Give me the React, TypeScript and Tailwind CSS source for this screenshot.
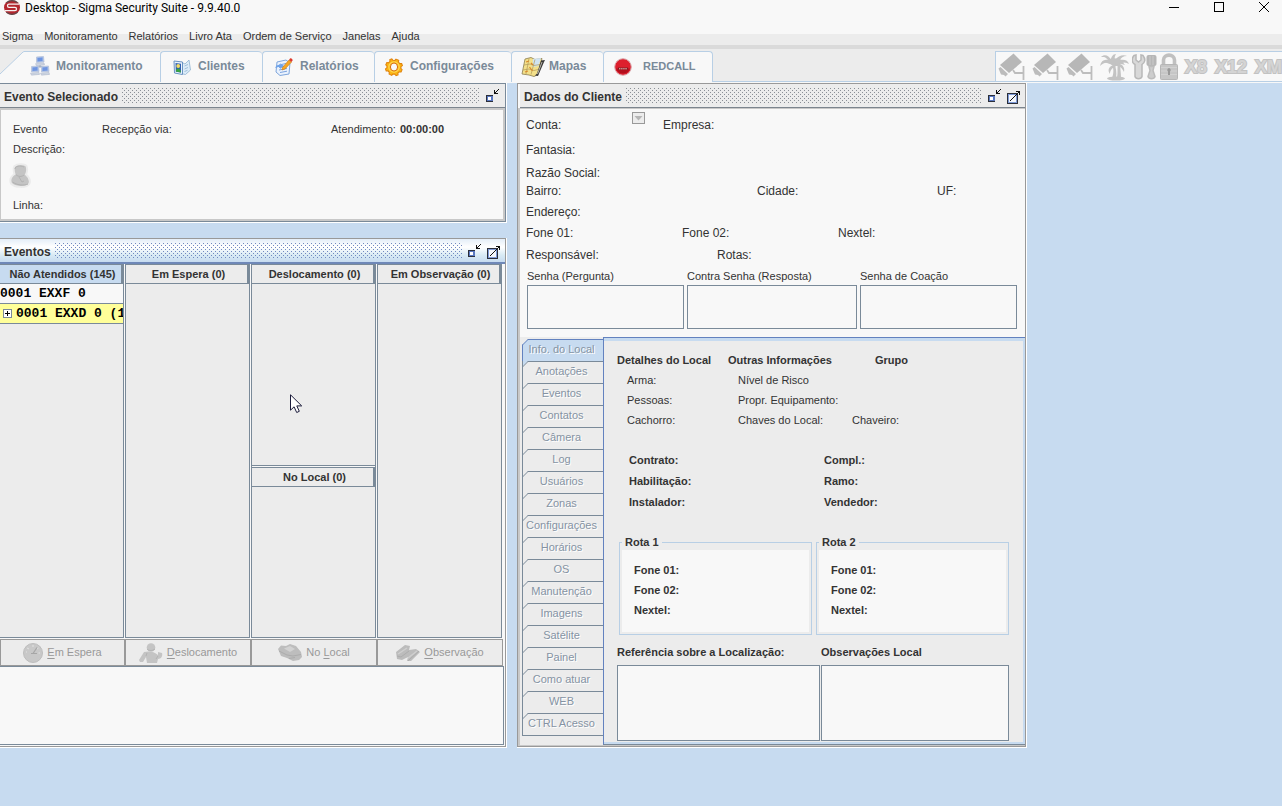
import React from 'react';

const DOTS =
  'bg-[conic-gradient(from_270deg_at_1px_1px,#8a8f96_90deg,transparent_0),conic-gradient(from_270deg_at_1px_1px,#8a8f96_90deg,transparent_0)] bg-[length:4px_4px] bg-[position:0_0,2px_2px]';
const DOTS_ACTIVE =
  'bg-[conic-gradient(from_270deg_at_1px_1px,#7088c0_90deg,transparent_0),conic-gradient(from_270deg_at_1px_1px,#7088c0_90deg,transparent_0)] bg-[length:4px_4px] bg-[position:0_0,2px_2px]';

/* ---------- icons ---------- */

function Logo() {
  return (
    <svg width="16" height="16" viewBox="0 0 16 16" aria-hidden="true">
      <ellipse cx="8" cy="7.500" rx="8" ry="7.300" fill="#b3262e" />
      <path d="M2.500 2.700A8 7.300 0 0 1 13.500 2.700M2.500 12.300A8 7.300 0 0 0 13.500 12.300" stroke="#5d4a4c" strokeWidth="1.200" fill="none" />
      <path d="M15 4.200H5C3.800 4.200 3.500 4.800 3.500 5.800S4 7.400 5 7.400H11C12.200 7.400 12.500 8 12.500 9S12 10.700 11 10.700H1" stroke="#f6f1f1" strokeWidth="1.300" fill="none" />
    </svg>
  );
}

function MinimizeIcon() {
  return (
    <svg width="14" height="14" viewBox="0 0 14 14" shapeRendering="crispEdges" aria-hidden="true">
      <rect x="0" y="7" width="7" height="7" fill="#2b2f3a" />
      <rect x="1" y="8" width="6" height="6" fill="#5a78c0" />
      <rect x="2" y="9" width="3" height="3" fill="#fff" />
      <rect x="0" y="13" width="7" height="1" fill="#2b2f3a" />
      <path d="M8 2h1v3h3v1H8zM9 4h1v1H9zM10 3h1v1h-1zM11 2h1v1h-1zM12 1h1v1h-1z" fill="#111" />
    </svg>
  );
}

function MaximizeIcon() {
  return (
    <svg width="14" height="14" viewBox="0 0 14 14" shapeRendering="crispEdges" aria-hidden="true">
      <rect x="0" y="3" width="11" height="11" fill="#2b2f3a" />
      <rect x="1" y="4" width="9" height="9" fill="#7f9bd8" />
      <rect x="2" y="5" width="7" height="7" fill="#f4f7fc" />
      <path d="M3 10h1v1H3zM4 9h1v1H4zM5 8h1v1H5zM6 7h1v1H6zM7 6h1v1H7zM8 5h1v1H8zM9 4h1v1H9zM10 3h1v1h-1zM11 2h1v1h-1zM9 1h4v4h-1V2H9z" fill="#111" />
    </svg>
  );
}

function NetworkIcon() {
  return (
    <svg width="20" height="20" viewBox="0 0 20 20" aria-hidden="true">
      <path d="M10 9v3M5 12l5-2 5 2" stroke="#9aa7bd" fill="none" />
      {[
        [5.5, 0.5],
        [0.5, 10],
        [10.5, 10],
      ].map(([x, y]) => (
        <g key={x} transform={`translate(${x} ${y})`}>
          <path d="M1 0.5L8 0l.5 5.5L1 6z" fill="#a9c0ea" stroke="#b6c2d8" strokeWidth="0.8" />
          <path d="M2 1.4L7 1v3.5L2 5z" fill="#6f95e0" />
          <path d="M0 7.2L8.5 6.4 9 8.4 1 9.2z" fill="#cdd5e2" stroke="#a8b3c6" strokeWidth="0.5" />
        </g>
      ))}
    </svg>
  );
}

function ClientIcon() {
  return (
    <svg width="20" height="20" viewBox="0 0 20 20" aria-hidden="true">
      <path d="M9 5l4 2 4-4 1.500 10-5 4.500-5-1z" fill="#dcecf8" stroke="#8fb2d0" strokeWidth="0.8" />
      <path d="M12.500 9l3.500-1.500M12.500 12l3.500-1.500M12.500 14.500l3-1.200" stroke="#8fb2d0" strokeWidth="0.8" />
      <path d="M2 4L10.500 5v12.500L2.500 16z" fill="#eaf3fd" stroke="#6a93c4" />
      <path d="M3.500 6l5.500.8v8.700l-5.200-.8z" fill="#2f5fb0" />
      <circle cx="6.200" cy="9" r="1.900" fill="#f5dc62" />
      <path d="M3.800 14.500c.4-4.300 4.800-4 5.200 1z" fill="#38a33f" />
    </svg>
  );
}

function ReportIcon() {
  return (
    <svg width="20" height="20" viewBox="0 0 20 20" aria-hidden="true">
      <path d="M3 5l9-2 4 3-1 11-9 1.500L2 15z" fill="#eaf2fd" stroke="#7fa6dc" />
      <path d="M5 8l7-1.500M5 10.500l8-1.500M5 13l8-1.500M6 15.500l7-1.300" stroke="#6d98da" strokeWidth="0.9" />
      <path d="M1 11c1-3 4-4 6-3l-1-2 4 3-4 3v-2c-2 0-3 0-5 1z" fill="#6fa4ea" />
      <path d="M8.500 10.500L15 3l2.500 2-6.500 7-3 1z" fill="#f6a623" stroke="#c97b12" strokeWidth="0.6" />
      <path d="M15 3l1-1.500c1-.8 3 .8 2.500 2L17.500 5z" fill="#dd3b2e" />
    </svg>
  );
}

function GearIcon() {
  return (
    <svg width="20" height="20" viewBox="0 0 20 20" aria-hidden="true">
      <g transform="rotate(25 10 10)">
        <path
          d="M8.500 2h3l.5 1.700 1.800.8 1.700-.9 1.500 1.500-.8 1.700.8 1.700 1.500.5v2.500l-1.600.6-.8 1.600.9 1.700-1.500 1.500-1.700-.8-1.800.8-.5 1.600h-3l-.5-1.700-1.800-.8-1.600.9-1.500-1.500.8-1.700-.8-1.700-1.500-.5V9l1.600-.6.8-1.600-.9-1.700 1.500-1.500 1.700.8 1.700-.7z"
          fill="#fbb413"
          stroke="#e0820c"
        />
      </g>
      <circle cx="10" cy="10" r="5.200" fill="none" stroke="#ffd84f" strokeWidth="1.200" />
      <ellipse cx="10" cy="10" rx="3.600" ry="4" fill="#f8f8f8" stroke="#d9700b" />
    </svg>
  );
}

function MapIcon() {
  return (
    <svg width="24" height="20" viewBox="0 0 24 20" aria-hidden="true">
      <path d="M4 2l6-1.500 4 2 7-1-4 16-4 2-5-1.500-7-1z" fill="#f3e08a" stroke="#8a7c50" strokeWidth="0.8" />
      <path d="M12 2l8-.9-2.500 8-6 1z" fill="#cfe3f2" />
      <path d="M3 8l6-1 4 1.500 6-1M2 13l6-1 5 1.500 4-1M8 1.500L5 17M14 2.500l-4 15" stroke="#b09a5a" strokeWidth="0.7" fill="none" />
      <path d="M5 5l3-1M10 6l2 2M8.500 10l3 4M4 15l3-1" stroke="#d98a2b" strokeWidth="1.200" />
      <path d="M20 3.500l4-.5-1 2-3 7-3 7-3-.5 2-2z" fill="#3b3a38" />
      <path d="M21 5l-4.500 12" stroke="#b8b4a8" />
    </svg>
  );
}

function RedcallIcon() {
  return (
    <svg width="18" height="18" viewBox="0 0 18 18" aria-hidden="true">
      <circle cx="9" cy="9" r="8.300" fill="#dd1f2d" stroke="#d9a9ad" />
      <path d="M2 10.500h14c-1 3-3.500 5-7 5s-6-2-7-5z" fill="#b30f1d" />
      <path d="M4 10.500h10" stroke="#7c1a20" strokeWidth="1.800" />
      <path d="M5 10.800h8" stroke="#f0c9c4" strokeDasharray="1.500 0.600" />
    </svg>
  );
}

function CameraIcon() {
  return (
    <svg width="28" height="28" viewBox="0 0 28 28" aria-hidden="true">
      <path d="M15.500 0.500L24 9 11 20 2 12z" fill="#b7b7b7" />
      <path d="M0.500 15.500L2.500 14l7.500 7-2.500 2.500-1.500-1.500-3-.5z" fill="#bcbcbc" />
      <path d="M15 17l2 3h8.500M25.500 13v14" stroke="#bdbdbd" strokeWidth="1.800" fill="none" />
    </svg>
  );
}

function PalmIcon() {
  return (
    <svg width="30" height="28" viewBox="0 0 30 28" aria-hidden="true">
      <g fill="#c3c3c3">
        <path d="M12 12C7 8 3 10 0 13c1-5 4-7 8-6C5 3 3 4 1 4c3-3 8-2 10 3 0-3 2-6 5-6-1 2-2 4-1 6 3-4 8-6 12-4-4 0-6 2-7 4 4-1 8 0 9 4-3-2-6-2-9 0 3 1 5 4 4 8-2-4-4-6-8-6-3 1-6 4-6 8-3-4-1-8 4-9z" />
        <path d="M11 9c3 6 3 11 1 16h4c1-5 0-11-2-16zM18 10c-1 4 0 10-1 15h4c0-5-1-11-1-15z" />
        <path d="M4 9l8-4 8 1 5 6-7-2-5 2z" />
        <ellipse cx="16" cy="25.500" rx="9" ry="2" />
      </g>
    </svg>
  );
}

function ToolsIcon() {
  return (
    <svg width="25" height="26" viewBox="0 0 25 26" aria-hidden="true">
      <path
        d="M2 1.500l2-.5v5l2.500 2L9 6V1l2 .5c3 4 2 7-1 9v12c-1 3-6 3-7 0v-12C0 9-1 5 2 1.500z"
        fill="#d8d8d8"
        stroke="#b8b8b8"
        strokeWidth="1.500"
      />
      <rect x="14.500" y="1" width="10" height="11" rx="2" fill="#b6b6b6" />
      <path d="M18 2v9M21 2v9" stroke="#cacaca" />
      <path d="M17 12.500h5l-1 4 2 6c-1 3-6 3-7 0l2-6z" fill="#cdcdcd" stroke="#bcbcbc" strokeWidth="1.500" />
    </svg>
  );
}

function LockIcon() {
  return (
    <svg width="20" height="27" viewBox="0 0 20 27" aria-hidden="true">
      <path d="M4.500 12V7C4.500 0.500 15.500 0.500 15.500 7V12" fill="none" stroke="#c0c0c0" strokeWidth="3.600" />
      <rect x="1.500" y="11.500" width="17" height="15" rx="1" fill="#c6c6c6" stroke="#b6b6b6" />
      <path d="M2 14.500h16M2 18h16M2 21.500h16" stroke="#d2d2d2" />
      <path d="M10 15a2 2 0 0 1 1 3.500V22H9v-3.500A2 2 0 0 1 10 15z" fill="#999" />
    </svg>
  );
}

function UserIcon() {
  return (
    <svg width="24" height="26" viewBox="0 0 24 26" aria-hidden="true">
      <path
        d="M5.500 3c3-2.500 10-2.500 12 0 1 3 1 5.500-.5 8.500 3 2.500 4.500 6 3.500 9-3 5-15 4-18.500 0-1.500-3.500 0-7 3.500-9.500-1-3-1.500-5.500 0-8z"
        fill="#c4c4c4"
        stroke="#ebebeb"
        strokeWidth="2"
      />
      <path d="M6 6c0-3 5-4 9-2M7 11.500c2 2.500 6 2.500 8 .5M3.500 19c4 3 11 4 15.500 2M10 14l3 5 2-1" stroke="#b2b2b2" fill="none" />
    </svg>
  );
}

function ClockIcon() {
  return (
    <svg width="20" height="20" viewBox="0 0 20 20" aria-hidden="true">
      <circle cx="10" cy="10" r="9.500" fill="#c8c8c8" stroke="#bdbdbd" />
      <path d="M4 5l2 1M10 2v2M15.500 5l-1.500 1M3 9h1M17 10h-1.500" stroke="#e2e2e2" />
      <path d="M8 10.500h6M10 10.500l4-6" stroke="#a6a6a6" strokeWidth="1.200" fill="none" />
    </svg>
  );
}

function PersonIcon() {
  return (
    <svg width="24" height="20" viewBox="0 0 24 20" aria-hidden="true">
      <g fill="#c4c4c4">
        <circle cx="12" cy="4.500" r="4.300" />
        <path d="M5 9c4-1 10-1 14 3v-3l4 1c1 3-1 6-4 6l-1 4H8l-1-6-3 5H1l-1-2z" />
      </g>
      <path d="M7 13l1-3M17 16l2-3M8 6c2 2 5 2 8 0" stroke="#b3b3b3" fill="none" />
    </svg>
  );
}

function CarIcon() {
  return (
    <svg width="24" height="17" viewBox="0 0 24 17" aria-hidden="true">
      <path d="M0 5l3-3.500L8 2l4-2 6 2 5 6 1 5-3 3-6 1-6-3-6-2z" fill="#bdbdbd" />
      <path d="M6 4.500l6-2.500 5 3-5 3z" fill="#d2d2d2" />
      <path d="M1 7l8 4 6 1 8-1.500M11 14.500l6-1" stroke="#acacac" fill="none" />
    </svg>
  );
}

function BinocularsIcon() {
  return (
    <svg width="24" height="18" viewBox="0 0 24 18" aria-hidden="true">
      <path d="M0 8l9-7 5 1-1 4 7-1 4 3-9 9-4 0 1-4-6 3-5-1z" fill="#bcbcbc" />
      <path d="M2 10l9-6M12 14l9-7" stroke="#cfcfcf" strokeWidth="1.500" />
      <path d="M1 12l4 1 8-6M12 17l2-2 9-8" stroke="#adadad" fill="none" />
    </svg>
  );
}

/* ---------- frames ---------- */

function FrameTitle({ title, active = false, maximizable = false }: { title: string; active?: boolean; maximizable?: boolean }) {
  return (
    <header
      className={
        active
          ? 'flex h-[25px] items-center border-b-2 border-[#6f88b8] bg-[linear-gradient(#e4eef8,#ffffff_35%,#d8eaf4_70%,#c7dbf0)] pt-0.5 pr-1 pl-1'
          : 'flex h-6 items-center border-b border-[#7c858e] bg-[#ececec] pt-0.5 pr-1 pl-1'
      }
    >
      <h2 className="text-xs font-bold">{title}</h2>
      <div className={`mr-1.5 mb-0.5 ml-1 h-4 flex-1 ${active ? DOTS_ACTIVE : DOTS}`} />
      <button type="button" aria-label="Minimizar" className="mr-px mb-1">
        <MinimizeIcon />
      </button>
      {maximizable && (
        <button type="button" aria-label="Maximizar" className="ml-1">
          <MaximizeIcon />
        </button>
      )}
    </header>
  );
}

function EventoSelecionado() {
  return (
    <section className="absolute top-0 left-0 w-[507px] border-r border-b border-white">
      <div className="border-t border-r border-b border-[#7a8a99]">
        <FrameTitle title="Evento Selecionado" />
        <div className="border-2 border-l border-[#c8c8c8] bg-[#f8f8f8] pt-[9px] pb-1 pl-3 text-[11px] leading-5">
          <div className="flex">
            <span className="w-[89px]">Evento</span>
            <span className="w-[229px]">Recepção via:</span>
            <span className="w-[69px]">Atendimento:</span>
            <b>00:00:00</b>
          </div>
          <p>Descrição:</p>
          <div className="-ml-1 py-1">
            <UserIcon />
          </div>
          <p className="pt-0.5">Linha:</p>
        </div>
      </div>
    </section>
  );
}

function ColumnTitle({ children, selected = false }: { children: React.ReactNode; selected?: boolean }) {
  return (
    <h3
      className={`h-[19px] shrink-0 border-r-2 border-b border-[#7a8a99] text-center text-[11px] leading-[18px] font-bold whitespace-nowrap ${
        selected ? 'bg-[#c7dbf0] pl-1' : 'bg-[#ececec] pl-1'
      }`}
    >
      {children}
    </h3>
  );
}

function Column({ children, first = false }: { children: React.ReactNode; first?: boolean }) {
  return (
    <div
      className={`flex min-w-0 flex-col border-y border-r border-[#7a8a99] ${
        first ? '' : 'ml-px border-l shadow-[-1px_0_0_#f8f8f8]'
      }`}
    >
      {children}
    </div>
  );
}

function ActionButton({ icon, before = '', letter, after }: { icon: React.ReactNode; before?: string; letter: string; after: string }) {
  return (
    <button
      type="button"
      disabled
      className="flex h-[27px] items-center justify-center gap-1 border border-[#999999] bg-[#ececec] text-[11px] text-[#999999]"
    >
      {icon}
      <span>
        {before}
        <u className="underline-offset-2">{letter}</u>
        {after}
      </span>
    </button>
  );
}

function Eventos() {
  return (
    <section className="absolute top-[155px] left-0 w-[507px] border-r border-b border-white">
      <div className="border-t border-r border-b border-[#999999] bg-[#f8f8f8]">
        <FrameTitle title="Eventos" active maximizable />
        <div className="grid h-[374px] grid-cols-[124px_126px_126px_126px]">
          <Column first>
            <ColumnTitle selected>Não Atendidos (145)</ColumnTitle>
            <ul className="flex-1 bg-[#ececec] font-['Liberation_Mono',monospace] text-[13px] leading-[19px] font-bold text-black">
              <li className="border-b border-[#7a8a99] bg-[#f8f8f8]">0001 EXXF 0</li>
              <li className="flex items-center overflow-hidden border-b border-[#7a8a99] bg-[#ffff99] pl-[3px] whitespace-nowrap">
                <button type="button" aria-label="Expandir" className="mr-1 shrink-0">
                  <svg width="9" height="9" viewBox="0 0 9 9" shapeRendering="crispEdges" aria-hidden="true">
                    <rect x="0.500" y="0.500" width="8" height="8" fill="#fff" stroke="#7a8a99" />
                    <path d="M2 4.500h5M4.500 2v5" stroke="#000" />
                  </svg>
                </button>
                0001 EXXD 0 (1
              </li>
            </ul>
          </Column>
          <Column>
            <ColumnTitle>Em Espera (0)</ColumnTitle>
            <div className="flex-1 bg-[#ececec]" />
          </Column>
          <Column>
            <ColumnTitle>Deslocamento (0)</ColumnTitle>
            <div className="h-[182px] border-b border-[#7a8a99] bg-[#ececec]" />
            <div className="mt-px border-t border-[#7a8a99]" />
            <ColumnTitle>No Local (0)</ColumnTitle>
            <div className="flex-1 bg-[#ececec]" />
          </Column>
          <Column>
            <ColumnTitle>Em Observação (0)</ColumnTitle>
            <div className="flex-1 bg-[#ececec]" />
          </Column>
        </div>
        <div className="mt-px grid grid-cols-[125px_126px_126px_126px]">
          <ActionButton icon={<ClockIcon />} letter="E" after="m Espera" />
          <ActionButton icon={<PersonIcon />} letter="D" after="eslocamento" />
          <ActionButton icon={<CarIcon />} before="No " letter="L" after="ocal" />
          <ActionButton icon={<BinocularsIcon />} letter="O" after="bservação" />
        </div>
        <textarea
          aria-label="Detalhes do evento"
          className="mb-px block h-[79px] w-[504px] resize-none border-y border-r border-[#7a8a99] bg-[#f8f8f8] outline-none"
        />
      </div>
    </section>
  );
}

const SIDE_TABS = [
  'Info. do Local',
  'Anotações',
  'Eventos',
  'Contatos',
  'Câmera',
  'Log',
  'Usuários',
  'Zonas',
  'Configurações',
  'Horários',
  'OS',
  'Manutenção',
  'Imagens',
  'Satélite',
  'Painel',
  'Como atuar',
  'WEB',
  'CTRL Acesso',
];

function SideTab({ label, selected }: { label: string; selected: boolean }) {
  return (
    <button
      type="button"
      role="tab"
      aria-selected={selected}
      className={`relative block h-[22px] w-full border-t border-l pr-[3px] pb-[3px] text-center text-[11px] leading-[18px] whitespace-nowrap text-[#8593a3] [text-shadow:1px_1px_0_#ffffff] ${
        selected ? 'border-[#6382bf] bg-[#c7dbf0]' : 'border-[#7a8a99] bg-[#ececec]'
      }`}
    >
      <svg className="absolute -top-px -left-px" width="6" height="6" viewBox="0 0 6 6" aria-hidden="true">
        <path d="M0 0h6L0 6z" fill={selected || label !== 'Anotações' ? '#ececec' : '#c7dbf0'} />
        <path d="M0.500 6L6 0.500" stroke={selected ? '#6382bf' : '#7a8a99'} />
        {!selected && <path d="M0.500 0v6" stroke="#7a8a99" />}
      </svg>
      {label}
    </button>
  );
}

function Secret({ id, label, className }: { id: string; label: string; className: string }) {
  return (
    <div className={className}>
      <label htmlFor={id} className="block text-[11px] leading-4 whitespace-nowrap">
        {label}
      </label>
      <textarea id={id} className="mt-px block h-11 w-full resize-none border border-[#7a8a99] bg-[#f8f8f8] outline-none" />
    </div>
  );
}

function Rota({ title }: { title: string }) {
  return (
    <fieldset className="w-[193px] border border-[#b8cfe5] px-[2px] pb-[2px]">
      <legend className="px-[3px] leading-4">{title}</legend>
      <div className="bg-[#f8f8f8] px-3 pt-2.5 pb-3 leading-5">
        <p>Fone 01:</p>
        <p>Fone 02:</p>
        <p>Nextel:</p>
      </div>
    </fieldset>
  );
}

function DadosDoCliente() {
  return (
    <section className="absolute top-0 left-[517px] w-[510px] border-r border-b border-white">
      <div className="border border-[#999999] bg-[#f8f8f8]">
        <div className="border-l-2 border-[#f8f8f8]">
          <FrameTitle title="Dados do Cliente" maximizable />
        </div>
        <div className="border-t border-b border-l-2 border-[#c8c8c8]">
          <div className="pt-2 pl-1.5 text-xs leading-4">
            <div className="flex">
              <span className="w-[106px]">Conta:</span>
              <button type="button" disabled aria-label="Abrir lista de contas" className="-mt-[5px] h-3 w-[13px] border border-[#999999] bg-[#ececec]">
                <svg width="11" height="10" viewBox="0 0 11 10" aria-hidden="true">
                  <path d="M1.500 3h8l-4 4.500z" fill="#b5b5b5" />
                </svg>
              </button>
              <span className="ml-[18px]">Empresa:</span>
            </div>
            <p className="mt-[9px]">Fantasia:</p>
            <p className="mt-[7px]">Razão Social:</p>
            <div className="mt-0.5 flex">
              <span className="w-[231px]">Bairro:</span>
              <span className="w-[180px]">Cidade:</span>
              <span>UF:</span>
            </div>
            <p className="mt-[5px]">Endereço:</p>
            <div className="mt-[5px] flex">
              <span className="w-[156px]">Fone 01:</span>
              <span className="w-[156px]">Fone 02:</span>
              <span>Nextel:</span>
            </div>
            <div className="mt-[6px] flex">
              <span className="w-[191px]">Responsável:</span>
              <span>Rotas:</span>
            </div>
            <div className="mt-[5px] flex gap-[3px] pl-px">
              <Secret id="senha" label="Senha (Pergunta)" className="w-[157px]" />
              <Secret id="contra-senha" label="Contra Senha (Resposta)" className="w-[170px]" />
              <Secret id="coacao" label="Senha de Coação" className="w-[157px]" />
            </div>
          </div>

          <div className="mt-2 flex bg-[#ececec]">
            <div role="tablist" aria-orientation="vertical" className="w-[83px] pt-0.5 pl-[2px]">
              <div className="border-b border-[#7a8a99]">
                {SIDE_TABS.map((label, i) => (
                  <SideTab key={label} label={label} selected={i === 0} />
                ))}
              </div>
            </div>
            <div role="tabpanel" className="flex-1 border-t border-b border-l border-t-[#6382bf] border-b-[#7a8a99] border-l-[#6382bf]">
              <div className="border-t-[3px] border-r-2 border-b-2 border-[#c7dbf0] pt-[9px] pb-px pl-[13px] text-[11px] leading-5">
                <div className="flex font-bold">
                  <span className="w-[111px] whitespace-nowrap">Detalhes do Local</span>
                  <span className="w-[147px]">Outras Informações</span>
                  <span>Grupo</span>
                </div>
                <div className="pl-2.5">
                  <div className="flex">
                    <span className="w-[111px]">Arma:</span>
                    <span>Nível de Risco</span>
                  </div>
                  <div className="flex">
                    <span className="w-[111px]">Pessoas:</span>
                    <span>Propr. Equipamento:</span>
                  </div>
                  <div className="flex">
                    <span className="w-[111px]">Cachorro:</span>
                    <span className="w-[114px]">Chaves do Local:</span>
                    <span>Chaveiro:</span>
                  </div>
                </div>
                <div className="grid grid-cols-[195px_auto] gap-y-px pt-5 pl-3 font-bold">
                  <span>Contrato:</span>
                  <span>Compl.:</span>
                  <span>Habilitação:</span>
                  <span>Ramo:</span>
                  <span>Instalador:</span>
                  <span>Vendedor:</span>
                </div>
                <div className="mt-[22px] ml-0.5 flex gap-1 font-bold">
                  <Rota title="Rota 1" />
                  <Rota title="Rota 2" />
                </div>
                <div className="mt-[7px] flex gap-px">
                  <div className="w-[203px]">
                    <label htmlFor="referencia" className="block font-bold">
                      Referência sobre a Localização:
                    </label>
                    <textarea id="referencia" className="mt-[3px] block h-[76px] w-full resize-none border border-[#7a8a99] bg-[#f8f8f8] outline-none" />
                  </div>
                  <div className="w-[188px]">
                    <label htmlFor="observacoes" className="block font-bold">
                      Observações Local
                    </label>
                    <textarea id="observacoes" className="mt-[3px] block h-[76px] w-full resize-none border border-[#7a8a99] bg-[#f8f8f8] outline-none" />
                  </div>
                </div>
              </div>
            </div>
          </div>
        </div>
      </div>
    </section>
  );
}

/* ---------- top of the window ---------- */

function TopTab({ label, icon, className }: { label: string; icon: React.ReactNode; className: string }) {
  return (
    <button
      type="button"
      role="tab"
      aria-selected="false"
      className={`flex h-[31px] items-center rounded-t-[4px] border-t border-l border-[#b8cfe5] bg-[#f8f8f8] font-bold text-[#7a8a99] ${className}`}
    >
      {icon}
      <span className="pb-0.5">{label}</span>
    </button>
  );
}

function TitleBar() {
  return (
    <header className="flex h-7 items-start bg-[#f8f8f8] pl-1">
      <Logo />
      <h1 className="ml-[5px] flex-1 font-['Roboto',sans-serif] text-xs leading-4 text-black">
        Desktop - Sigma Security Suite - 9.9.40.0
      </h1>
      <div className="flex gap-[33px] pt-px pr-3">
        <button type="button" aria-label="Minimizar janela">
          <svg width="12" height="12" viewBox="0 0 12 12" shapeRendering="crispEdges" aria-hidden="true">
            <path d="M1 6.500h10" stroke="#000" />
          </svg>
        </button>
        <button type="button" aria-label="Maximizar janela">
          <svg width="12" height="12" viewBox="0 0 12 12" shapeRendering="crispEdges" aria-hidden="true">
            <rect x="1.500" y="1.500" width="9" height="9" fill="none" stroke="#000" />
          </svg>
        </button>
        <button type="button" aria-label="Fechar janela">
          <svg width="12" height="12" viewBox="0 0 12 12" aria-hidden="true">
            <path d="M1 1l10 10M11 1L1 11" stroke="#000" />
          </svg>
        </button>
      </div>
    </header>
  );
}

const MENUS = ['Sigma', 'Monitoramento', 'Relatórios', 'Livro Ata', 'Ordem de Serviço', 'Janelas', 'Ajuda'];
const STATUS_TEXT = 'text-lg leading-none font-bold text-[#d4d4d4] [paint-order:stroke] [-webkit-text-stroke:2px_#c2c2c2]';

export default function App() {
  return (
    <div className="flex min-h-screen flex-col overflow-hidden bg-[#c7dbf0] font-['Liberation_Sans',Arial,sans-serif] text-[#333333]">
      <TitleBar />
      <nav className="flex h-[17px] gap-[11px] bg-[linear-gradient(#f8f8f8_6px,#ececec_6px)] pl-0.5 text-[11px] leading-[17px]">
        {MENUS.map((m) => (
          <button key={m} type="button">
            {m}
          </button>
        ))}
      </nav>
      <div className="h-1 bg-[#dadada]" />
      <div className="flex h-[34px] border-b border-[#f8f8f8] bg-[#ececec] pt-0.5">
        <div role="tablist" className="flex flex-1 border-b border-[#b8cfe5]">
          <button type="button" role="tab" aria-selected="true" className="-mb-px flex w-40 text-xs font-bold text-[#7a8a99]">
            <svg width="24" height="32" viewBox="0 0 24 32" aria-hidden="true">
              <path d="M0 23L24 0v32H0z" fill="#f8f8f8" />
              <path d="M0 23L23 1l1-.5" stroke="#b8cfe5" fill="none" />
            </svg>
            <span className="flex h-8 flex-1 items-center gap-1.5 border-t border-[#b8cfe5] bg-[#f8f8f8] pb-1 pl-1.5">
              <NetworkIcon />
              Monitoramento
            </span>
          </button>
          <TopTab label="Clientes" icon={<ClientIcon />} className="w-[102px] gap-1.5 pl-[11px] text-xs" />
          <TopTab label="Relatórios" icon={<ReportIcon />} className="w-28 gap-1.5 pl-[11px] text-xs" />
          <TopTab label="Configurações" icon={<GearIcon />} className="w-[137px] gap-1.5 pl-[9px] text-xs" />
          <TopTab label="Mapas" icon={<MapIcon />} className="w-[92px] gap-1 pl-[9px] text-xs" />
          <TopTab label="REDCALL" icon={<RedcallIcon />} className="w-[110px] gap-[11px] border-r pl-2.5 text-[11px]" />
        </div>
        <div className="flex w-[287px] items-center gap-1.5 overflow-hidden border border-r-0 border-[#b8cfe5] bg-[#f8f8f8] pl-0.5">
          <div className="flex shrink-0 gap-1.5">
            <CameraIcon />
            <CameraIcon />
            <CameraIcon />
          </div>
          <div className="flex shrink-0 items-center gap-0.5">
            <PalmIcon />
            <ToolsIcon />
            <LockIcon />
          </div>
          <div className="flex shrink-0 gap-2">
            <span className={STATUS_TEXT}>X8</span>
            <span className={STATUS_TEXT}>X12</span>
            <span className={STATUS_TEXT}>XM</span>
          </div>
        </div>
      </div>

      <main className="relative min-h-[680px] flex-1">
        <EventoSelecionado />
        <Eventos />
        <DadosDoCliente />
        <svg className="absolute top-[311px] left-[290px]" width="13" height="20" viewBox="0 0 13 20" aria-hidden="true">
          <path d="M0.500 0.800v15.400l3.600-3.400 2.600 5.700 2.600-1.200-2.500-5.400h4.900z" fill="#fff" stroke="#1b1b3a" />
        </svg>
      </main>
    </div>
  );
}
